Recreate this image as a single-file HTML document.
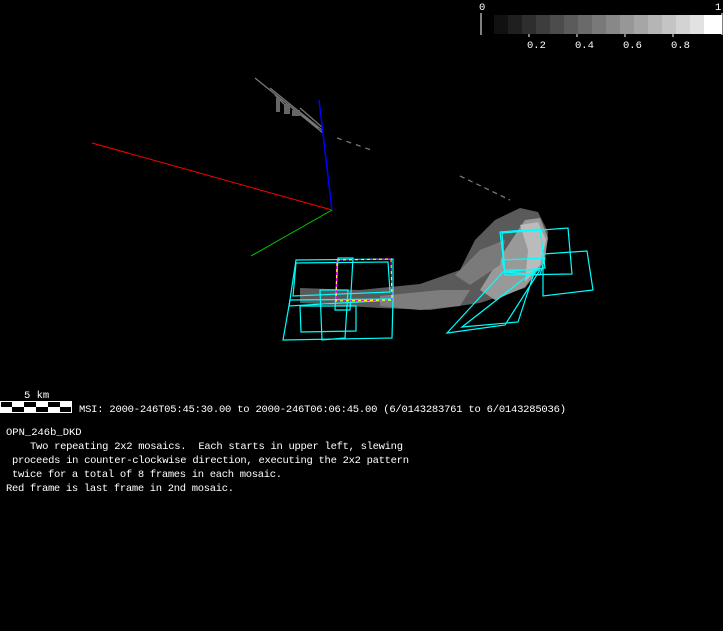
<!DOCTYPE html>
<html><head><style>
html,body{margin:0;padding:0;background:#000;width:723px;height:631px;overflow:hidden}
svg{display:block}
text{font-family:"Liberation Mono","DejaVu Sans Mono",monospace;font-size:10.5px;fill:#fff}
</style></head><body>
<svg width="723" height="631" viewBox="0 0 723 631">
<g>
<rect x="494" y="15" width="14.3" height="19" fill="#111"/>
<rect x="508" y="15" width="14.3" height="19" fill="#1f1f1f"/>
<rect x="522" y="15" width="14.3" height="19" fill="#2e2e2e"/>
<rect x="536" y="15" width="14.3" height="19" fill="#3d3d3d"/>
<rect x="550" y="15" width="14.3" height="19" fill="#4c4c4c"/>
<rect x="564" y="15" width="14.3" height="19" fill="#5b5b5b"/>
<rect x="578" y="15" width="14.3" height="19" fill="#6a6a6a"/>
<rect x="592" y="15" width="14.3" height="19" fill="#797979"/>
<rect x="606" y="15" width="14.3" height="19" fill="#888"/>
<rect x="620" y="15" width="14.3" height="19" fill="#979797"/>
<rect x="634" y="15" width="14.3" height="19" fill="#a6a6a6"/>
<rect x="648" y="15" width="14.3" height="19" fill="#b5b5b5"/>
<rect x="662" y="15" width="14.3" height="19" fill="#c4c4c4"/>
<rect x="676" y="15" width="14.3" height="19" fill="#d3d3d3"/>
<rect x="690" y="15" width="14.3" height="19" fill="#e2e2e2"/>
<rect x="704" y="15" width="18" height="19" fill="#fff"/>
<line x1="481" y1="13" x2="481" y2="35" stroke="#fff"/>
<line x1="722" y1="13" x2="722" y2="35" stroke="#fff"/>
<g stroke="#fff"><line x1="529" y1="34" x2="529" y2="37"/><line x1="577" y1="34" x2="577" y2="37"/><line x1="625" y1="34" x2="625" y2="37"/><line x1="673" y1="34" x2="673" y2="37"/></g>
<text x="479" y="10">0</text><text x="715" y="10">1</text>
<text x="527" y="48">0.2</text><text x="575" y="48">0.4</text><text x="623" y="48">0.6</text><text x="671" y="48">0.8</text>
</g>
<g stroke="#777" stroke-width="1.3" fill="none">
<path d="M255,78 L323,133 M270,88 L322,130 M282,100 L318,128 M275,95 L290,110 M300,108 L323,128"/>
<path d="M337,138 L374,151" stroke-dasharray="5,5"/>
<path d="M460,176 L510,200" stroke-dasharray="5,4"/>
</g>
<g fill="#666"><rect x="276" y="98" width="4" height="14"/><rect x="284" y="104" width="6" height="10"/><rect x="292" y="110" width="8" height="6"/></g>
<path d="M300,288 L360,290 L420,284 L460,270 L475,240 L495,220 L520,208 L538,212 L548,232 L545,262 L525,288 L480,303 L430,310 L380,308 L300,303Z" fill="#5a5a5a"/>
<path d="M480,290 L505,250 L525,220 L540,218 L548,238 L544,262 L525,287 L495,300Z" fill="#999"/>
<path d="M520,225 L538,222 L546,240 L540,265 L525,282 L528,250Z" fill="#bbb"/>
<path d="M455,275 L480,250 L505,240 L500,265 L470,285Z" fill="#7a7a7a"/>
<path d="M380,296 L440,290 L470,290 L460,306 L420,310 L380,306Z" fill="#7d7d7d"/>
<line x1="92" y1="143" x2="332" y2="210" stroke="#f00"/>
<line x1="319" y1="100" x2="332" y2="210" stroke="#00f" stroke-width="1.5"/>
<line x1="332" y1="210" x2="251" y2="256" stroke="#0c0"/>
<g stroke="#0ff" stroke-width="1.2" fill="none">
<path d="M296,260 L393,259 L393,300 L289,306Z"/>
<path d="M296,263 L388,262 L390,292 L293,296Z"/>
<path d="M290,300 L393,299 L392,338 L283,340Z"/>
<path d="M300,306 L356,306 L356,331 L301,332Z"/>
<path d="M320,290 L348,290 L345,338 L322,340Z"/>
<path d="M338,258 L353,258 L350,310 L335,310Z"/>
<path d="M500,232 L540,229 L545,268 L505,272Z"/>
<path d="M502,233 L568,228 L572,274 L505,275Z"/>
<path d="M543,254 L587,251 L593,290 L543,296Z"/>
<path d="M502,260 L545,258 L540,275 L505,272Z"/>
<path d="M447,333 L505,325 L540,270 L505,270Z"/>
<path d="M462,327 L518,322 L535,270Z"/>
</g>
<g stroke="#ff0" stroke-width="1.2" stroke-dasharray="3,3" fill="none"><path d="M337,260 L391,259 L392,300 L336,301Z"/></g>
<g stroke="#f0f" stroke-width="1" stroke-dasharray="3,3" stroke-dashoffset="3" fill="none"><path d="M337,260 L391,259 L392,300 L336,301Z"/></g>
<rect x="0" y="401" width="72" height="12" fill="#fff"/>
<g fill="#000"><rect x="1" y="402" width="11" height="5"/><rect x="12" y="407" width="12" height="5"/><rect x="24" y="402" width="12" height="5"/><rect x="36" y="407" width="12" height="5"/><rect x="48" y="402" width="12" height="5"/><rect x="60" y="407" width="11" height="5"/></g>
<text x="24" y="398">5 km</text>
<text x="79" y="412" textLength="487" lengthAdjust="spacing">MSI:  2000-246T05:45:30.00 to 2000-246T06:06:45.00 (6/0143283761 to 6/0143285036)</text>
<text x="6" y="435">OPN_246b_DKD</text>
<text x="6" y="449" xml:space="preserve" textLength="397" lengthAdjust="spacing">    Two repeating 2x2 mosaics.  Each starts in upper left, slewing</text>
<text x="6" y="463" xml:space="preserve" textLength="403" lengthAdjust="spacing"> proceeds in counter-clockwise direction, executing the 2x2 pattern</text>
<text x="6" y="477" xml:space="preserve" textLength="276" lengthAdjust="spacing"> twice for a total of 8 frames in each mosaic.</text>
<text x="6" y="491" textLength="228" lengthAdjust="spacing">Red frame is last frame in 2nd mosaic.</text>
</svg>
</body></html>
